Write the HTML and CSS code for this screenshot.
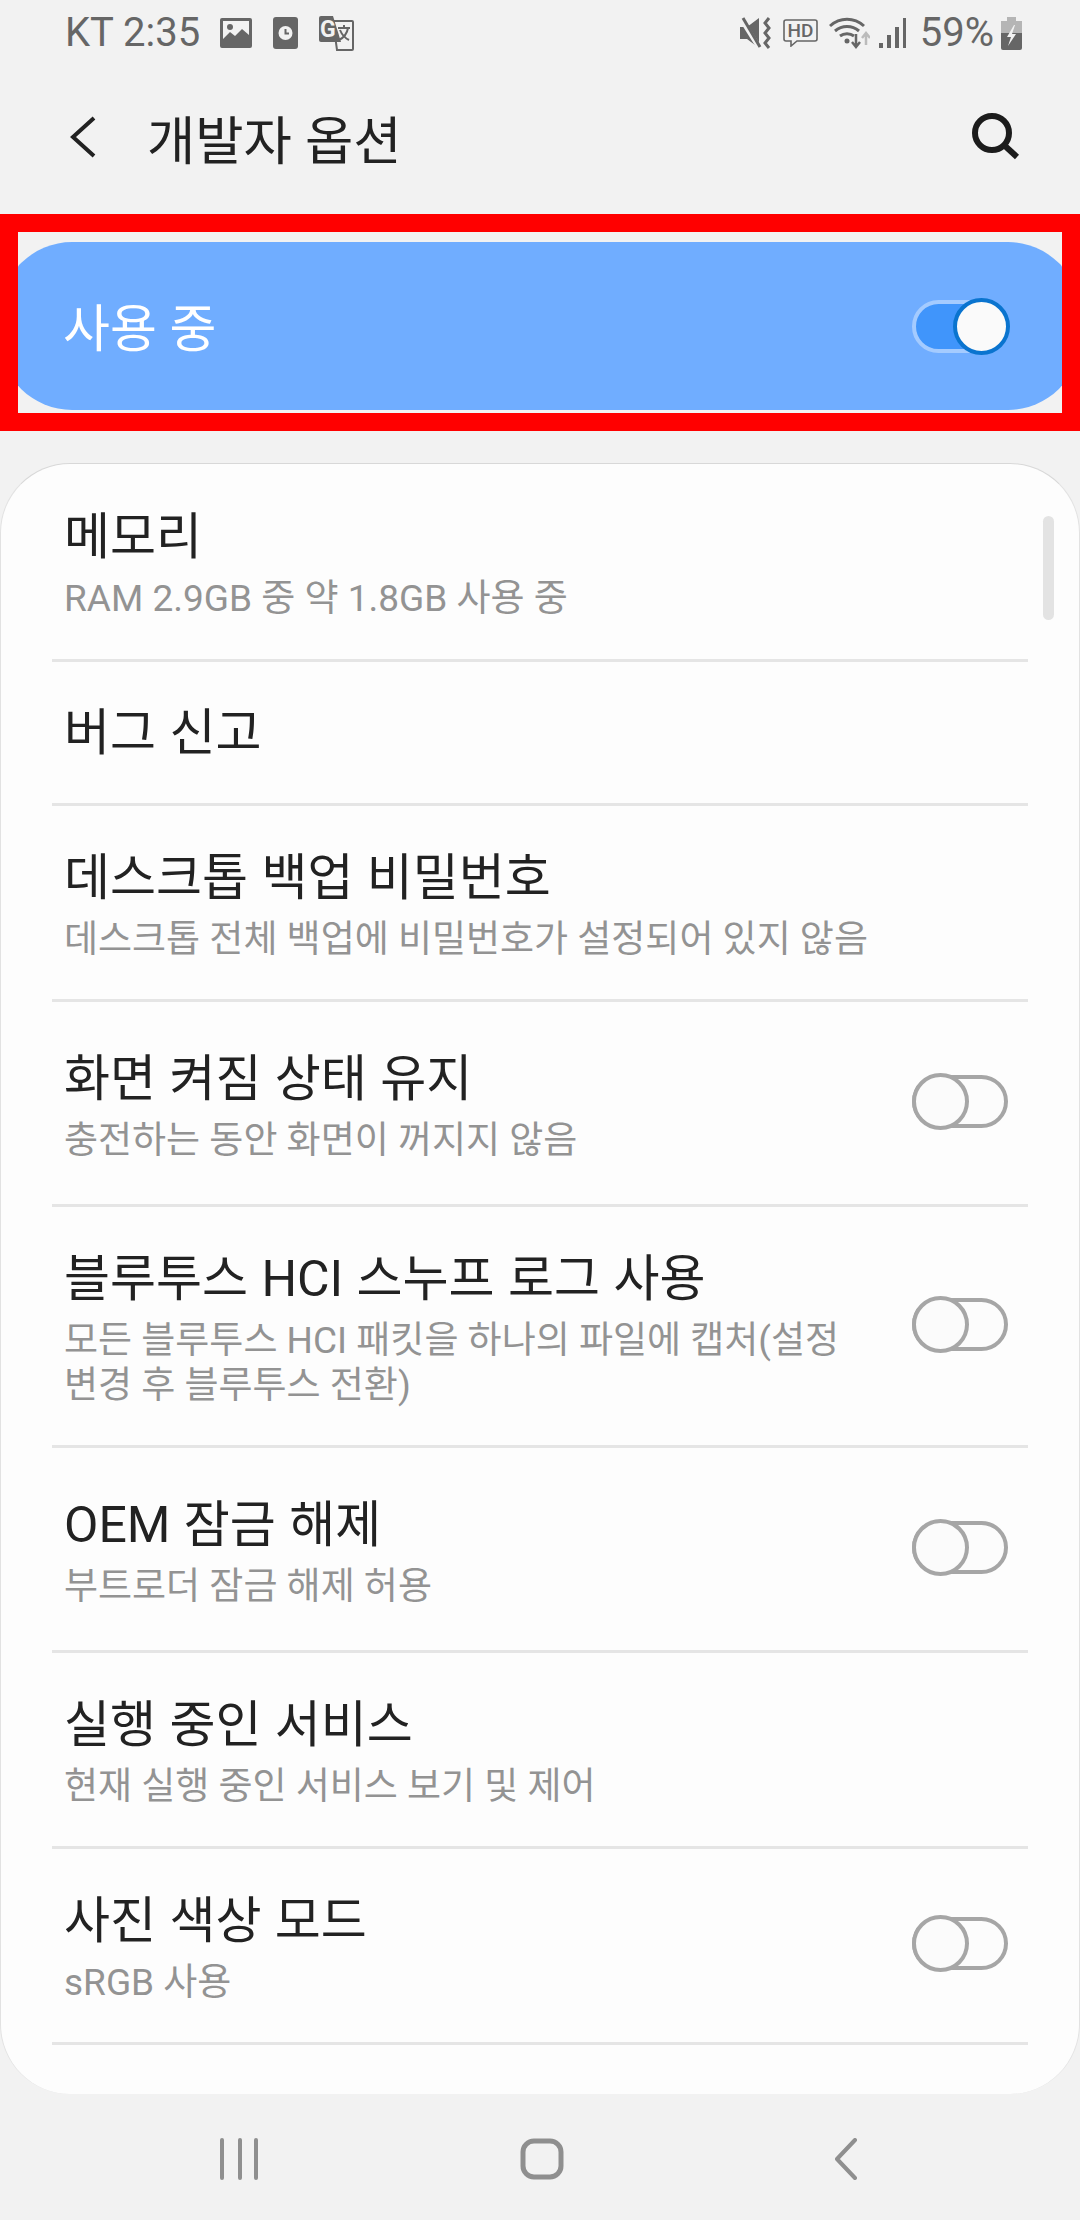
FILE: index.html
```html
<!DOCTYPE html>
<html lang="ko">
<head>
    <meta charset="UTF-8">
    <meta name="viewport" content="width=device-width, initial-scale=1.0">
    <title>개발자 옵션</title>
    <link rel="stylesheet" href="styles.css">
</head>
<body>
    <div class="status-bar">
        <div class="status-left">
            <span class="status-text">KT 2:35</span>
            <svg class="icon-image" width="32" height="30" viewBox="0 0 32 30"><path fill="#666" fill-rule="evenodd" d="M2 0h28a2 2 0 0 1 2 2v26a2 2 0 0 1-2 2H2a2 2 0 0 1-2-2V2a2 2 0 0 1 2-2zM3 3v18l7-7 5 4 7-7 7 6V3z"/><circle cx="10" cy="9" r="3" fill="#666"/></svg>
            <svg class="icon-clock" width="25" height="32" viewBox="0 0 25 32"><rect width="25" height="32" rx="3" fill="#666"/><circle cx="12.5" cy="16" r="7" fill="#f2f2f2"/><path d="M12.5 12v4.5h3.5" fill="none" stroke="#666" stroke-width="2"/></svg>
            <svg class="icon-translate" width="35" height="35" viewBox="0 0 35 35"><path d="M14 5h19a1 1 0 0 1 1 1v27a1 1 0 0 1-1 1H18z" fill="#f2f2f2" stroke="#666" stroke-width="2"/><path d="M2 0h12l8 26H2a2 2 0 0 1-2-2V2a2 2 0 0 1 2-2z" fill="#666"/><text x="1" y="21" class="svg-g">G</text><path d="M19 12h12M25 9v3M29 12c-1 6-5 10-9 12M21 14c2 5 5 8 9 10" fill="none" stroke="#666" stroke-width="2"/></svg>
        </div>
        <div class="status-right">
            <svg width="32" height="32" viewBox="0 0 32 32"><path d="M0 10h7L19 1v30L7 22H0z" fill="#666"/><path d="M0 0l20 32" stroke="#f2f2f2" stroke-width="5"/><path d="M3 1l17 29" stroke="#666" stroke-width="3"/><path d="M29 1l-4 5 4 5-4 5 4 5-4 5 4 5" fill="none" stroke="#666" stroke-width="3"/></svg>
            <svg class="icon-hd" width="35" height="28" viewBox="0 0 35 28"><path d="M3 1h29a2 2 0 0 1 2 2v17a2 2 0 0 1-2 2H14l-6 5v-5H3a2 2 0 0 1-2-2V3a2 2 0 0 1 2-2z" fill="none" stroke="#666" stroke-width="1.6"/><text x="17.500" y="18" text-anchor="middle" class="svg-hd">HD</text></svg>
            <svg class="icon-wifi" width="41" height="32" viewBox="0 0 41 32"><path d="M1 9c10-9 24-9 34 0M6 14c7-6 17-6 24 0M11 19c4-3 10-3 14 0" fill="none" stroke="#666" stroke-width="3"/><circle cx="18" cy="24" r="2.500" fill="#666"/><path d="M27 17v11M23 25l4 5 4-5" fill="none" stroke="#666" stroke-width="2.500"/><path d="M37 28V17M33 21l4-5 4 5" fill="none" stroke="#bbb" stroke-width="2.500"/></svg>
            <svg class="icon-signal" width="29" height="30" viewBox="0 0 29 30"><path d="M1 25h4v5H1zM9 17h4v13H9zM17 9h4v21h-4zM25 0h3v30h-3z" fill="#666"/></svg>
            <span class="status-text status-pct">59%</span>
            <svg class="icon-battery" width="21" height="33" viewBox="0 0 21 33"><path d="M6 0h9v4h6v12H0V4h6z" fill="#b5b5b5"/><path d="M0 16h21v15a2 2 0 0 1-2 2H2a2 2 0 0 1-2-2z" fill="#666"/><path d="M13 8l-7 12h4l-3 9 8-12h-4l3-9z" fill="#f2f2f2"/></svg>
        </div>
    </div>

    <header class="app-bar">
        <svg width="26" height="42" viewBox="0 0 26 42"><path d="M24 2L3 21l21 19" fill="none" stroke="#222" stroke-width="4"/></svg>
        <h1 class="page-title">개발자 옵션</h1>
        <svg width="48" height="47" viewBox="0 0 48 47"><circle cx="20" cy="20" r="17" fill="none" stroke="#1c1c1c" stroke-width="6"/><path d="M32 32l13 12" stroke="#1c1c1c" stroke-width="6"/></svg>
    </header>

    <div class="highlight">
        <div class="master">
            <span class="master-label">사용 중</span>
            <span class="switch switch-on"></span>
        </div>
    </div>

    <main class="card">
        <div class="scroll-thumb"></div>

        <div class="row row-first">
            <div class="row-text">
                <div class="row-title">메모리</div>
                <div class="row-sub">RAM 2.9GB 중 약 1.8GB 사용 중</div>
            </div>
        </div>
        <div class="row row-single">
            <div class="row-text">
                <div class="row-title">버그 신고</div>
            </div>
        </div>
        <div class="row">
            <div class="row-text">
                <div class="row-title">데스크톱 백업 비밀번호</div>
                <div class="row-sub">데스크톱 전체 백업에 비밀번호가 설정되어 있지 않음</div>
            </div>
        </div>
        <div class="row row-tall">
            <div class="row-text">
                <div class="row-title">화면 켜짐 상태 유지</div>
                <div class="row-sub">충전하는 동안 화면이 꺼지지 않음</div>
            </div>
            <span class="switch"></span>
        </div>
        <div class="row row-three">
            <div class="row-text">
                <div class="row-title">블루투스 HCI 스누프 로그 사용</div>
                <div class="row-sub">모든 블루투스 HCI 패킷을 하나의 파일에 캡처(설정 변경 후 블루투스 전환)</div>
            </div>
            <span class="switch"></span>
        </div>
        <div class="row row-tall">
            <div class="row-text">
                <div class="row-title">OEM 잠금 해제</div>
                <div class="row-sub">부트로더 잠금 해제 허용</div>
            </div>
            <span class="switch"></span>
        </div>
        <div class="row">
            <div class="row-text">
                <div class="row-title">실행 중인 서비스</div>
                <div class="row-sub">현재 실행 중인 서비스 보기 및 제어</div>
            </div>
        </div>
        <div class="row">
            <div class="row-text">
                <div class="row-title">사진 색상 모드</div>
                <div class="row-sub">sRGB 사용</div>
            </div>
            <span class="switch"></span>
        </div>
    </main>

    <nav class="nav-bar">
        <svg width="38" height="42" viewBox="0 0 38 42"><path d="M2 2v38M20 2v38M36 2v38" stroke="#8f8f8f" stroke-width="4" stroke-linecap="round"/></svg>
        <svg width="44" height="42" viewBox="0 0 44 42"><rect x="3" y="3" width="38" height="36" rx="11" fill="none" stroke="#8f8f8f" stroke-width="5"/></svg>
        <svg class="nav-back" width="24" height="42" viewBox="0 0 24 42"><path d="M21 2L3 21l18 19" fill="none" stroke="#8f8f8f" stroke-width="4" stroke-linecap="round" stroke-linejoin="round"/></svg>
    </nav>
</body>
</html>
```
FILE: styles.css
```css
body {
    font-family: Roboto, "Noto Sans CJK KR", sans-serif;
    background-color: #f2f2f2;
    margin: 0;
    width: 1080px;
    height: 2220px;
    overflow: hidden;
}

svg {
    display: block;
    flex: none;
}

.svg-g {
    font: 700 23px Roboto, sans-serif;
    fill: #f2f2f2;
}

.svg-hd {
    font: 500 19px Roboto, sans-serif;
    fill: #666;
}

.status-bar {
    height: 64px;
    padding: 2px 58px 0 65px;
    box-sizing: border-box;
    display: flex;
    justify-content: space-between;
    align-items: center;
}

.status-left,
.status-right {
    display: flex;
    align-items: center;
    gap: 11px;
}

.status-text {
    font-size: 40px;
    color: #666;
    line-height: 40px;
}

.icon-image {
    margin-left: 9px;
}

.icon-clock,
.icon-translate {
    margin-left: 10px;
}

.icon-signal {
    margin-left: -3px;
}

.status-pct {
    margin-left: 2px;
}

.icon-battery {
    margin-left: -4px;
}

.app-bar {
    height: 150px;
    padding: 0 60px 5px 70px;
    display: flex;
    align-items: center;
    box-sizing: border-box;
}

.page-title {
    flex: 1;
    margin: 0 0 0 51px;
    font-size: 52.5px;
    font-weight: 400;
    color: #222;
}

.highlight {
    height: 217px;
    box-sizing: border-box;
    border: 18px solid #ff0000;
    overflow: hidden;
    padding-top: 10px;
}

.master {
    height: 168px;
    margin: 0 -18px;
    border-radius: 72px;
    background-color: #70adff;
    display: flex;
    align-items: center;
    justify-content: space-between;
    padding: 0 72px 0 63px;
}

.master-label {
    font-size: 51px;
    color: #fff;
    margin-bottom: 2px;
}

.switch {
    position: relative;
    flex: none;
    width: 96px;
    height: 53px;
    box-sizing: border-box;
    border: 4px solid #a6a6a6;
    border-radius: 27px;
    background-color: #fcfcfc;
}

.switch::after {
    content: "";
    position: absolute;
    left: -4px;
    top: -6px;
    width: 57px;
    height: 57px;
    box-sizing: border-box;
    border: 4px solid #a6a6a6;
    border-radius: 50%;
    background-color: #fbfbfb;
}

.row .switch {
    margin-bottom: 4px;
}

.switch-on {
    border-color: #a4cbff;
    background-color: #4095fb;
}

.switch-on::after {
    left: auto;
    right: -6px;
    border-color: #0a74cf;
    background-color: #fafafa;
}

.card {
    position: relative;
    margin-top: 32px;
    height: 1631px;
    box-sizing: border-box;
    padding: 0 51px;
    background-color: #fdfdfd;
    border-top: 1px solid #d8d8d8;
    border-left: 1px solid #e2e2e2;
    border-right: 1px solid #e2e2e2;
    border-radius: 70px;
}

.scroll-thumb {
    position: absolute;
    top: 52px;
    right: 25px;
    width: 11px;
    height: 104px;
    border-radius: 6px;
    background-color: #e3e3e3;
}

.row {
    height: 196px;
    box-sizing: border-box;
    border-bottom: 3px solid #e5e5e5;
    display: flex;
    align-items: center;
    padding: 0 20px 0 12px;
}

.row-first {
    height: 198px;
}

.row-single {
    height: 144px;
}

.row-tall {
    height: 205px;
}

.row-three {
    height: 241px;
}

.row-text {
    flex: 1;
    min-width: 0;
}

.row-title {
    font-size: 50px;
    line-height: 62px;
    padding-top: 4px;
    color: #222;
    word-spacing: 1px;
}

.row-single .row-title {
    padding-top: 0;
}

.row-sub {
    font-size: 37px;
    line-height: 45px;
    margin-top: 8px;
    color: #939393;
    margin-right: 40px;
    word-break: keep-all;
}

.nav-bar {
    height: 126px;
    display: flex;
    align-items: center;
    padding: 4px 0 0 220px;
    box-sizing: border-box;
    gap: 262px;
}

.nav-back {
    margin-left: 8px;
}
```
